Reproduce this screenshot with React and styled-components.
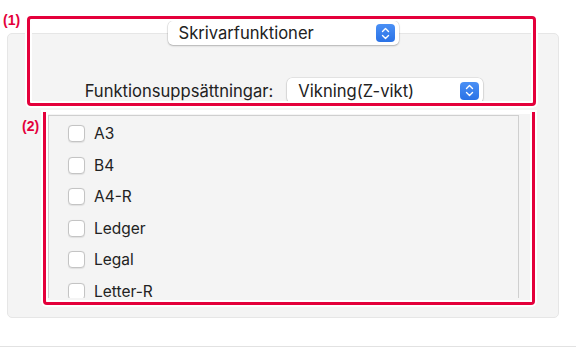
import React from 'react';
import styled, { createGlobalStyle } from 'styled-components';

const GlobalStyle = createGlobalStyle`
  html, body {
    margin: 0;
    padding: 0;
    background: #ffffff;
  }
  body {
    font-family: Inter, "Noto Sans", "Liberation Sans", sans-serif;
    color: #222222;
  }
`;

const Page = styled.div`
  position: relative;
  width: 576px;
  height: 350px;
  padding-top: 21px;
  box-sizing: border-box;
  overflow: hidden;
`;

const HeaderRow = styled.div`
  position: relative;
  z-index: 1;
  display: flex;
  justify-content: center;
  width: 552px;
  margin-left: 7px;
`;

const Popup = styled.div`
  display: flex;
  align-items: center;
  justify-content: space-between;
  box-sizing: border-box;
  width: ${({ width }) => width}px;
  height: ${({ height }) => height || 24}px;
  padding: 0 4px 0 11px;
  background: #ffffff;
  border-radius: 5px;
  box-shadow: 0 0 0 0.5px rgba(0, 0, 0, 0.12), 0 1px 2px rgba(0, 0, 0, 0.22);
  font-size: 16.6px;
`;

const Stepper = styled.span`
  display: flex;
  align-items: center;
  justify-content: center;
  width: 19px;
  height: 18px;
  border-radius: 4px;
  background: linear-gradient(#4a90f5, #2a72e6);
`;

const Panel = styled.div`
  box-sizing: border-box;
  width: 552px;
  height: 285px;
  margin: -12px 0 0 7px;
  padding-top: 44px;
  background: #f4f4f4;
  border: 1px solid #e6e6e6;
  border-radius: 5px;
`;

const SetRow = styled.div`
  display: flex;
  align-items: center;
  justify-content: center;
  gap: 14px;
  font-size: 16.6px;
  padding-left: 2px;
`;

const ListBox = styled.div`
  box-sizing: border-box;
  width: 471px;
  height: 183px;
  margin: 12px 0 0 40px;
  padding-top: 2px;
  background: #f4f4f4;
  border: 1px solid #cfcfcf;
  border-bottom: none;
  overflow: hidden;
`;

const Item = styled.label`
  display: flex;
  align-items: center;
  height: 31.5px;
  padding-left: 19px;
  font-size: 15.5px;
`;

const Box = styled.span`
  box-sizing: border-box;
  width: 17px;
  height: 17px;
  margin-right: 9px;
  background: #ffffff;
  border: 1px solid #c4c4c4;
  border-radius: 4px;
  box-shadow: 0 0.5px 1px rgba(0, 0, 0, 0.08);
`;

const Footer = styled.div`
  height: 1px;
  margin-top: 28px;
  background: #e2e2e2;
`;

const Mark = styled.div`
  position: absolute;
  left: ${({ x }) => x}px;
  top: ${({ y }) => y}px;
  width: ${({ w }) => w}px;
  height: ${({ h }) => h}px;
  box-sizing: border-box;
  border: 3px solid #e4003b;
  border-top-width: ${({ open }) => (open ? 0 : 3)}px;
  border-radius: ${({ open }) => (open ? '0 0 4px 4px' : '4px')};
  box-shadow: 0 0 0 2px #ffffff, inset 0 0 0 2px #ffffff;
  pointer-events: none;
  z-index: 2;
`;

const Tag = styled.span`
  position: absolute;
  left: ${({ x }) => x}px;
  top: ${({ y }) => y}px;
  color: #e4003b;
  font-family: "Liberation Sans", Arial, sans-serif;
  font-weight: bold;
  font-size: 14px;
  z-index: 2;
`;

const StepIcon = () => (
  <Stepper>
    <svg width="9" height="13" viewBox="0 0 9 13" fill="none" stroke="#fff" strokeWidth="1.4" strokeLinecap="round" strokeLinejoin="round">
      <path d="M1.5 4.5 L4.5 1.5 L7.5 4.5" />
      <path d="M1.5 8.5 L4.5 11.5 L7.5 8.5" />
    </svg>
  </Stepper>
);

const sizes = ['A3', 'B4', 'A4-R', 'Ledger', 'Legal', 'Letter-R'];

export default function App() {
  return (
    <>
      <GlobalStyle />
      <Page>
        <HeaderRow>
          <Popup width={231}>
            <span>Skrivarfunktioner</span>
            <StepIcon />
          </Popup>
        </HeaderRow>
        <Panel>
          <SetRow>
            <span>Funktionsuppsättningar:</span>
            <Popup width={196} height={25}>
              <span>Vikning(Z-vikt)</span>
              <StepIcon />
            </Popup>
          </SetRow>
          <ListBox>
            {sizes.map((s) => (
              <Item key={s}>
                <Box />
                {s}
              </Item>
            ))}
          </ListBox>
        </Panel>
        <Footer />
        <Mark x={27} y={16} w={509} h={90} />
        <Mark x={43} y={112} w={492} h={193} open />
        <Tag x={3} y={12}>(1)</Tag>
        <Tag x={22} y={118}>(2)</Tag>
      </Page>
    </>
  );
}
